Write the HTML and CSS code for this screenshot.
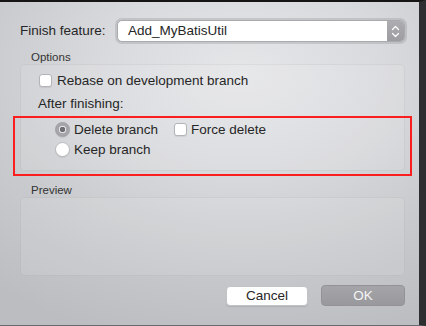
FILE: index.html
```html
<!DOCTYPE html>
<html lang="en">
<head>
  <meta charset="UTF-8" />
  <title>Finish feature</title>
  <link rel="stylesheet" href="styles.css">
</head>
<body>

  <!-- Finish feature sheet -->
  <div class="window">
    <div class="feature-row">
      <label class="field-label" for="feature">Finish feature:</label>
      <div class="select" id="feature">
        <span class="select-value">Add_MyBatisUtil</span>
        <span class="stepper">
          <svg width="9" height="13" viewBox="0 0 9 13">
            <path d="M1.5 4.5 L4.5 1.5 L7.5 4.5 M1.5 8.5 L4.5 11.5 L7.5 8.5" fill="none" stroke="#fff" stroke-width="1.3" stroke-linecap="round" stroke-linejoin="round"/>
          </svg>
        </span>
      </div>
    </div>

    <div class="group-title">Options</div>
    <div class="group options">
      <label class="check-row"><span class="checkbox"></span>Rebase on development branch</label>
      <div class="sub-title">After finishing:</div>
      <div class="radio-rows">
        <div class="radio-row">
          <label class="radio"><span class="radio-dot checked"></span>Delete branch</label>
          <label class="check-row force"><span class="checkbox"></span>Force delete</label>
        </div>
        <div class="radio-row">
          <label class="radio"><span class="radio-dot"></span>Keep branch</label>
        </div>
      </div>
      <div class="highlight"></div>
    </div>

    <div class="group-title preview-title">Preview</div>
    <div class="group preview"></div>

    <div class="buttons">
      <button class="button cancel-btn">Cancel</button>
      <button class="button ok-btn">OK</button>
    </div>
  </div>

</body>
</html>
```

FILE: styles.css
```css
* {
  box-sizing: border-box;
}

body {
  margin: 0;
  padding: 0;
  font-family: 'Liberation Sans', Arial, sans-serif;
  color: #262626;
  background: #2c2c2c;
}

/* Sheet window */
.window {
  width: 426px;
  height: 326px;
  padding: 18px 14px 0 20px;
  border-top: 2px solid #151515;
  border-right: 7px solid #2e2e30;
  border-bottom: 1px solid #6a6b6e;
  background: radial-gradient(ellipse 95% 85% at 58% 22%, #e5e6e8 0%, #d9dadd 35%, #c9cbce 65%, #bbbdc1 100%);
  display: flex;
  flex-direction: column;
  font-size: 13.5px;
}

.feature-row {
  display: flex;
  align-items: center;
  height: 22px;
}

.field-label {
  width: 97px;
  line-height: 22px;
}

.select {
  flex: 1;
  height: 22px;
  display: flex;
  align-items: center;
  background: #fff;
  border: 1px solid #a9aaae;
  border-radius: 5px;
  box-shadow: 0 0 0 2px rgba(150, 151, 156, 0.35);
  overflow: hidden;
}

.select-value {
  flex: 1;
  padding-left: 10px;
  line-height: 20px;
}

.stepper {
  width: 17px;
  height: 100%;
  display: flex;
  align-items: center;
  justify-content: center;
  background: linear-gradient(#adadb1, #9c9ca1);
}

/* Group boxes */
.group-title {
  margin-top: 8px;
  padding-left: 11px;
  font-size: 11.5px;
  line-height: 14px;
  color: #333;
}

.preview-title {
  margin-top: 12px;
}

.group {
  position: relative;
  border: 1px solid rgba(0, 0, 0, 0.05);
  border-radius: 5px;
  background: rgba(255, 255, 255, 0.1);
}

.options {
  height: 107px;
  padding: 8px 17px 13px;
}

.preview {
  height: 79px;
}

.check-row {
  display: flex;
  align-items: center;
  gap: 5px;
  height: 14px;
}

.checkbox {
  width: 13px;
  height: 13px;
  margin-left: 1px;
  background: #fff;
  border: 1px solid #b3b4b8;
  border-radius: 3px;
  box-shadow: 0 1px 1px rgba(0, 0, 0, 0.08);
}

.sub-title {
  margin-top: 10px;
  height: 14px;
  line-height: 14px;
}

.radio-rows {
  margin-top: 10px;
  padding-left: 17px;
  display: flex;
  flex-direction: column;
  gap: 4px;
}

.radio-row {
  display: flex;
  align-items: center;
  height: 16px;
}

.radio {
  display: flex;
  align-items: center;
  gap: 4px;
}

.radio-dot {
  width: 15px;
  height: 15px;
  border-radius: 50%;
  background: #fff;
  border: 1px solid #b8b9bd;
  box-shadow: 0 1px 1px rgba(0, 0, 0, 0.08);
}

.radio-dot.checked {
  background: radial-gradient(circle, #6f6f74 0 2.5px, #e4e4e6 3px 3.5px, #a5a5aa 4px);
  border-color: #9d9da2;
}

.force {
  margin-left: 15px;
  gap: 4px;
}

/* Red annotation frame over the "After finishing" choices */
.highlight {
  position: absolute;
  left: -8px;
  top: 51px;
  width: 399px;
  height: 60px;
  border: 2px solid #fb1e1e;
}

/* Dialog buttons */
.buttons {
  display: flex;
  justify-content: flex-end;
  align-items: center;
  gap: 13px;
  margin-top: 9px;
  height: 21px;
}

.button {
  font-family: inherit;
  font-size: 13.5px;
  border-radius: 4px;
  padding: 0;
  cursor: pointer;
}

.cancel-btn {
  width: 82px;
  height: 20px;
  background: #fff;
  color: #262626;
  border: 1px solid #c2c3c6;
  box-shadow: 0 1px 1px rgba(0, 0, 0, 0.1);
}

.ok-btn {
  width: 84px;
  height: 21px;
  background: linear-gradient(#a5a5a9, #98989d);
  color: #f5f5f5;
  border: 1px solid #939397;
}
```
